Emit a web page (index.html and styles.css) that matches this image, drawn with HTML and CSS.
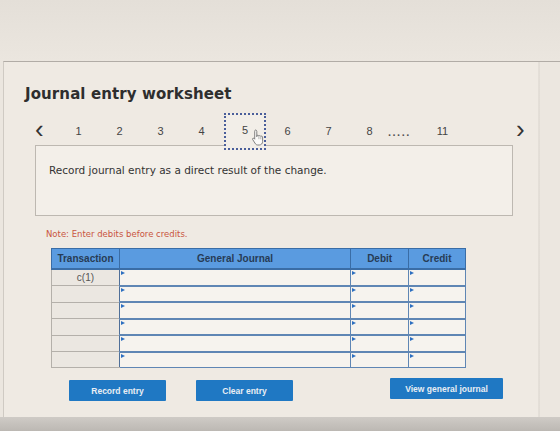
FILE: index.html
```html
<!DOCTYPE html>
<html lang="en">
<head>
<meta charset="utf-8">
<title>Journal entry worksheet</title>
<link rel="stylesheet" href="styles.css">
</head>
<body>
<div class="screen">
  <div class="top"></div>
  <div class="panel">
    <h1 class="title">Journal entry worksheet</h1>
    <nav class="pager">
      <span class="arrow">&lsaquo;</span>
      <span class="pg first">1</span>
      <span class="pg">2</span>
      <span class="pg">3</span>
      <span class="pg">4</span>
      <span class="pg current"><span class="num">5</span><svg class="cursor" viewBox="0 0 14 18" width="14" height="19"><path d="M4.5 1.5c.8 0 1.3.6 1.3 1.3v5.4l.1-1.1c.6-.5 1.6-.4 2 .3.5-.5 1.5-.4 1.9.4.6-.4 1.6-.1 1.8.7v4.4c0 2.2-1.4 3.6-3.3 3.6H6.6c-1 0-1.7-.5-2.2-1.2L1.6 10.9c-.4-.7.4-1.6 1.2-1.1l.9.9V2.8c0-.7.3-1.3.8-1.3z" fill="#fbfaf8" stroke="#666" stroke-width=".8"/><path d="M7.9 7.5v3.2M9.8 8v2.8" stroke="#888" stroke-width=".6"/></svg></span>
      <span class="pg">6</span>
      <span class="pg">7</span>
      <span class="pg">8</span>
      <span class="dots">.....</span>
      <span class="pg">11</span>
      <span class="arrow next">&rsaquo;</span>
    </nav>
    <div class="prompt">Record journal entry as a direct result of the change.</div>
    <p class="note">Note: Enter debits before credits.</p>
    <table class="journal">
      <thead>
        <tr>
          <th class="c-tr">Transaction</th>
          <th class="c-gj">General Journal</th>
          <th class="c-dr">Debit</th>
          <th class="c-cr">Credit</th>
        </tr>
      </thead>
      <tbody>
        <tr><td class="tr">c(1)</td><td class="in"></td><td class="in"></td><td class="in"></td></tr>
        <tr><td class="tr"></td><td class="in"></td><td class="in"></td><td class="in"></td></tr>
        <tr><td class="tr"></td><td class="in"></td><td class="in"></td><td class="in"></td></tr>
        <tr><td class="tr"></td><td class="in"></td><td class="in"></td><td class="in"></td></tr>
        <tr><td class="tr"></td><td class="in"></td><td class="in"></td><td class="in"></td></tr>
        <tr><td class="tr"></td><td class="in"></td><td class="in"></td><td class="in"></td></tr>
      </tbody>
    </table>
    <div class="actions">
      <button class="btn">Record entry</button>
      <button class="btn clear">Clear entry</button>
      <button class="btn view">View general journal</button>
    </div>
  </div>
  <div class="bottom"></div>
</div>
</body>
</html>
```

FILE: styles.css
```css
html, body {
  margin: 0;
  padding: 0;
}

body {
  width: 560px;
  height: 431px;
  overflow: hidden;
  background: #ebe6df;
  font-family: "DejaVu Sans", Verdana, sans-serif;
  color: #333;
}

.screen {
  display: flex;
  flex-direction: column;
  height: 431px;
}

.top {
  height: 61px;
  flex: none;
  background: linear-gradient(#e4dfd8, #ebe6df);
}

.panel {
  flex: none;
  height: 356px;
  margin: 0 0 0 3px;
  border-top: 1px solid #b1aca6;
  border-left: 1px solid #cfcac3;
  background: linear-gradient(90deg, #efeae3 0, #efeae3 534px, #d9d4cd 535px, #ece7e0 536px);
  padding: 22px 0 0 21px;
  box-sizing: border-box;
}

.title {
  margin: 0;
  font-size: 15px;
  font-weight: bold;
  color: #2e2e2e;
  line-height: 20px;
  letter-spacing: 0.1px;
}

.pager {
  display: flex;
  align-items: center;
  height: 38px;
  margin-top: 8px;
  font-family: "Liberation Sans", Arial, sans-serif;
  font-size: 11px;
  color: #444;
}

.arrow {
  font-size: 26px;
  line-height: 20px;
  color: #333;
  width: 20px;
  margin-left: 10px;
  margin-top: -4px;
}

.arrow.next {
  margin-left: 53px;
}

.pg {
  width: 41px;
  text-align: center;
  position: relative;
}

.pg.first {
  margin-left: 3px;
}

.pg.current {
  height: 37px;
  line-height: 30px;
  border: 2px dotted #4a5e9a;
  box-sizing: border-box;
  margin: 0 1px 0 2px;
  width: 42px;
  background: #f2eee8;
}

.cursor {
  position: absolute;
  left: 25px;
  top: 13px;
}

.dots {
  width: 34px;
  font-weight: bold;
  letter-spacing: 1.5px;
  margin-left: -2px;
  margin-top: 2px;
  color: #555;
}

.prompt {
  margin: -5px 0 0 10px;
  width: 478px;
  height: 71px;
  box-sizing: border-box;
  border: 1px solid #bdb8b1;
  background: #f3efe9;
  padding: 18px 13px 0;
  font-size: 10.5px;
  color: #333;
}

.note {
  margin: 13px 0 0 21px;
  font-size: 8.5px;
  color: #c9553f;
}

.journal {
  margin: 9px 0 0 26px;
  border-collapse: collapse;
  width: 415px;
  font-family: "Liberation Sans", Arial, sans-serif;
  font-size: 10px;
}

.journal th {
  background: #5a9be0;
  color: #273b55;
  font-weight: bold;
  height: 19px;
  padding: 0;
  border: 1px solid #3a6da6;
  border-bottom: 2px solid #3a6da6;
}

.c-tr { width: 67px; }
.c-gj { width: 231px; }
.c-dr { width: 57px; }
.c-cr { width: 56px; }

.journal td {
  height: 14.5px;
  padding: 0;
  border: 1px solid #5f86b4;
  background: #f6f3ee;
  position: relative;
}

.journal td.tr {
  background: #ebe7e1;
  border-color: #b4b0aa;
  border-right: 1px solid #4f6f98;
  text-align: center;
  color: #555;
  font-size: 10px;
}

.journal td.in {
  border-top: 2px solid #5f86b4;
}

.journal td.in::before {
  content: "";
  position: absolute;
  left: 1px;
  top: 1px;
  border-left: 4px solid #2d6fc0;
  border-top: 2px solid transparent;
  border-bottom: 2px solid transparent;
}

.actions {
  display: flex;
  align-items: center;
  margin: 12px 0 0 44px;
}

.btn {
  height: 21px;
  width: 97px;
  border: 0;
  border-radius: 1px;
  background: #1f78c3;
  color: #e9eef4;
  font-family: "Liberation Sans", Arial, sans-serif;
  font-weight: bold;
  font-size: 8.5px;
  padding: 0;
}

.btn.clear {
  margin-left: 30px;
}

.btn.view {
  margin-left: 97px;
  width: 113px;
  margin-top: -4px;
}

.bottom {
  flex: 1;
  background: linear-gradient(#cfcbc6, #bcb8b3);
}
```
